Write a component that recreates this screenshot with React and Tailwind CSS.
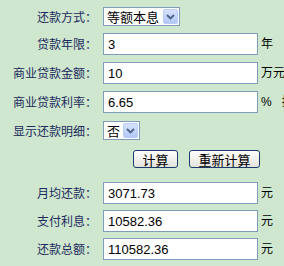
import React from "react";

const cjk = '"Noto Sans CJK SC", "Noto Sans CJK JP", sans-serif';
const mix = '"Liberation Sans", "Noto Sans CJK SC", sans-serif';

function Label({ children }) {
  return (
    <div
      className="w-[97px] shrink-0 text-right text-[12px] leading-none text-[#1b2a5c]"
      style={{ fontFamily: cjk }}
    >
      {children}
    </div>
  );
}

function Arrow() {
  return (
    <div className="h-[15px] w-[15px] mr-[1px] flex items-center justify-center rounded-[2px] border border-[#b9ccf5] bg-gradient-to-b from-[#d6e2fc] to-[#b2c8f6]">
      <svg width="9" height="6" viewBox="0 0 9 6">
        <path d="M1 1 L4.5 4.5 L8 1" fill="none" stroke="#4d6185" strokeWidth="1.8" />
      </svg>
    </div>
  );
}

function Select({ value, width }) {
  return (
    <div
      className="h-[19px] flex items-center justify-between border border-[#7f9db9] bg-white pl-[3px]"
      style={{ width }}
    >
      <span className="text-[13px] leading-none text-black" style={{ fontFamily: cjk }}>
        {value}
      </span>
      <Arrow />
    </div>
  );
}

function Input({ value }) {
  return (
    <div className="h-[22px] w-[155px] shrink-0 flex items-center border border-[#7f9db9] bg-white pl-[4px]">
      <span className="text-[13px] leading-none text-black" style={{ fontFamily: mix }}>
        {value}
      </span>
    </div>
  );
}

function Unit({ children }) {
  return (
    <span
      className="ml-[3px] whitespace-nowrap text-[12px] leading-none text-black"
      style={{ fontFamily: mix }}
    >
      {children}
    </span>
  );
}

function Row({ children, className = "" }) {
  return <div className={"flex items-center gap-[6px] " + className}>{children}</div>;
}

function Btn({ children, width }) {
  return (
    <div
      className="h-[18px] flex items-center justify-center rounded-[3px] border border-[#1c3a6b] bg-gradient-to-b from-white to-[#e3e2da] text-[13px] leading-none text-black"
      style={{ width, fontFamily: cjk }}
    >
      {children}
    </div>
  );
}

export default function App() {
  return (
    <div className="w-[284px] h-[266px] overflow-hidden bg-[#cfe7cf] pt-[7px]">
      <Row className="h-[19px]">
        <Label>还款方式：</Label>
        <Select value="等额本息" width={77} />
      </Row>
      <Row className="h-[22px] mt-[7px]">
        <Label>贷款年限：</Label>
        <div className="flex items-center">
          <Input value="3" />
          <Unit>年</Unit>
        </div>
      </Row>
      <Row className="h-[22px] mt-[7px]">
        <Label>商业贷款金额：</Label>
        <div className="flex items-center">
          <Input value="10" />
          <Unit>万元</Unit>
        </div>
      </Row>
      <Row className="h-[22px] mt-[7px]">
        <Label>商业贷款利率：</Label>
        <div className="flex items-center">
          <Input value="6.65" />
          <Unit>%&nbsp;&nbsp;&nbsp;按</Unit>
        </div>
      </Row>
      <Row className="h-[19px] mt-[8px]">
        <Label>显示还款明细：</Label>
        <Select value="否" width={37} />
      </Row>
      <div className="h-[18px] mt-[10px] flex items-center pl-[133px] gap-[11px]">
        <Btn width={45}>计算</Btn>
        <Btn width={71}>重新计算</Btn>
      </div>
      <Row className="h-[22px] mt-[14px]">
        <Label>月均还款：</Label>
        <div className="flex items-center">
          <Input value="3071.73" />
          <Unit>元</Unit>
        </div>
      </Row>
      <Row className="h-[22px] mt-[6px]">
        <Label>支付利息：</Label>
        <div className="flex items-center">
          <Input value="10582.36" />
          <Unit>元</Unit>
        </div>
      </Row>
      <Row className="h-[22px] mt-[6px]">
        <Label>还款总额：</Label>
        <div className="flex items-center">
          <Input value="110582.36" />
          <Unit>元</Unit>
        </div>
      </Row>
    </div>
  );
}
